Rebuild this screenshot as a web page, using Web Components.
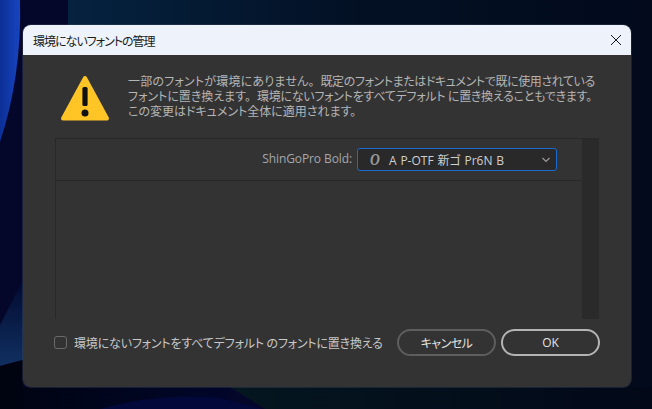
<!DOCTYPE html>
<html lang="ja">
<head>
<meta charset="utf-8">
<style>
  html, body { margin: 0; height: 100%; background: #020a1c; overflow: hidden; }
  .a { letter-spacing: .2px; }
  .b { letter-spacing: -.4px; }
  .c { letter-spacing: -.25px; }
  .stop { margin-right: 6px; }
</style>
</head>
<body>
<desktop-screen>
  <font-dialog heading="環境にないフォントの管理">
    <alert-message><span class="a">一部のフォントが環境にありません</span><span class="stop">。</span><span class="b">既定のフォントまたはドキュメントで既に使用されている</span><br><span>フォントに置き換えます</span><span class="stop">。</span><span class="c">環境にないフォントをすべてデフォルト に置き換えることもできます。</span><br>この変更はドキュメント全体に適用されます。</alert-message>
    <font-table>
      <font-row label="ShinGoPro Bold:" value="A P-OTF 新ゴ Pr6N B"></font-row>
    </font-table>
    <dialog-footer>
      <check-box>環境にないフォントをすべてデフォルト のフォントに置き換える</check-box>
      <pill-button slot="actions">キャンセル</pill-button>
      <pill-button slot="actions" primary>OK</pill-button>
    </dialog-footer>
  </font-dialog>
</desktop-screen>
<script>
const FONT = '"Noto Sans CJK JP", "Open Sans", sans-serif';

class DesktopScreen extends HTMLElement {
  connectedCallback() {
    this.attachShadow({ mode: 'open' }).innerHTML = `
      <style>
        :host { display: block; position: relative; width: 652px; height: 409px; overflow: hidden; background: #020a1c; font-family: ${FONT}; font-feature-settings: "palt"; }
        svg { position: absolute; inset: 0; }
        .stage { position: relative; padding: 25px 21px 22px 23px; height: 100%; box-sizing: border-box; }
      </style>
      <svg width="652" height="409" viewBox="0 0 652 409">
        <defs>
          <linearGradient id="blue" x1="0" y1="0" x2="1" y2="0">
            <stop offset="0" stop-color="#0c2f96"/>
            <stop offset="1" stop-color="#1745c0"/>
          </linearGradient>
          <linearGradient id="navy" x1="0" y1="0" x2="1" y2="0">
            <stop offset="0" stop-color="#05223f"/>
            <stop offset="0.5" stop-color="#031024"/>
            <stop offset="1" stop-color="#020a1c"/>
          </linearGradient>
          <linearGradient id="low" x1="0" y1="0" x2="0" y2="1">
            <stop offset="0" stop-color="#020a30"/>
            <stop offset="1" stop-color="#103060"/>
          </linearGradient>
          <linearGradient id="floor" x1="0" y1="0" x2="1" y2="0">
            <stop offset="0" stop-color="#000414"/>
            <stop offset="1" stop-color="#01062a"/>
          </linearGradient>
          <linearGradient id="shore" x1="0" y1="0" x2="1" y2="0">
            <stop offset="0" stop-color="#04161f"/>
            <stop offset="1" stop-color="#020818"/>
          </linearGradient>
        </defs>
        <rect width="652" height="409" fill="#04062a"/>
        <rect x="68" width="584" height="60" fill="url(#navy)"/>
        <rect x="600" y="60" width="52" height="349" fill="#020a1c"/>
        <path d="M0 0H20Q22 75 0 142Z" fill="url(#blue)"/>
        <path d="M0 325L23 280V360L0 366Z" fill="url(#low)"/>
        <path d="M0 366L23 360V409H0Z" fill="#000310"/>
        <rect x="23" y="387" width="207" height="22" fill="url(#floor)"/>
        <path d="M100 409Q160 392 220 398L262 409Z" fill="#02083a"/>
        <path d="M230 387H652V409H265Z" fill="url(#shore)"/>
      </svg>
      <div class="stage"><slot></slot></div>`;
  }
}

class FontDialog extends HTMLElement {
  connectedCallback() {
    this.attachShadow({ mode: 'open' }).innerHTML = `
      <style>
        :host { display: flex; flex-direction: column; height: 362px; border-radius: 8px; overflow: hidden; background: #333333; box-shadow: 0 0 0 1px rgba(70,80,100,.35); }
        header { flex: none; height: 30px; display: flex; align-items: center; justify-content: space-between; padding: 0 9px 0 10px; background: #eef2fa; color: #1a1a1a; font-size: 12px; letter-spacing: -1px; }
        svg { display: block; }
        main { flex: 1; display: flex; flex-direction: column; padding: 20px 32px 0 32px; }
      </style>
      <header>
        <span>${this.getAttribute('heading')}</span>
        <svg width="12" height="12" viewBox="0 0 12 12"><path d="M1 1L11 11M11 1L1 11" stroke="#1a1a1a" stroke-width="1" fill="none"/></svg>
      </header>
      <main><slot></slot></main>`;
  }
}

class AlertMessage extends HTMLElement {
  connectedCallback() {
    this.attachShadow({ mode: 'open' }).innerHTML = `
      <style>
        :host { display: flex; gap: 18px; height: 63px; color: #b5b5b5; font-size: 12px; line-height: 15px; white-space: nowrap; }
        svg { flex: none; display: block; margin-left: 5px; }
        .text { margin-top: -2px; }
      </style>
      <svg width="50" height="46" viewBox="0 0 50 46">
        <path d="M25 3 L47 43.5 H3 Z" fill="#ffc425" stroke="#ffc425" stroke-width="4" stroke-linejoin="round"/>
        <rect x="22.4" y="12" width="5.2" height="19" rx="1.6" fill="#111"/>
        <circle cx="25" cy="38" r="3.5" fill="#111"/>
      </svg>
      <div class="text"><slot></slot></div>`;
  }
}

class FontTable extends HTMLElement {
  connectedCallback() {
    this.attachShadow({ mode: 'open' }).innerHTML = `
      <style>
        :host { display: grid; grid-template-columns: 1fr 17px; height: 181px; border-top: 1px solid #282828; border-left: 1px solid #282828; box-sizing: border-box; }
        .rows { min-width: 0; }
        .bar { background: #2a2a2a; }
      </style>
      <div class="rows"><slot></slot></div>
      <div class="bar"></div>`;
  }
}

class FontRow extends HTMLElement {
  connectedCallback() {
    this.attachShadow({ mode: 'open' }).innerHTML = `
      <style>
        :host { display: flex; align-items: center; justify-content: flex-end; gap: 5px; height: 41px; padding-right: 25px; border-bottom: 1px solid #282828; color: #a4a8ac; font-size: 12px; }
        .label { font-family: "Open Sans", sans-serif; position: relative; top: -1px; letter-spacing: -.1px; }
        .select { box-sizing: border-box; width: 200px; height: 23px; display: flex; align-items: center; border: 1px solid #1a6ad0; border-radius: 3px; background: #292929; color: #d0d0d0; padding: 0 5px 0 12px; }
        .glyph { font: italic 700 17px "Liberation Serif", serif; color: #9a9a9a; width: 19px; }
        .glyph b { display: inline-block; font-weight: inherit; transform: scaleX(.8); transform-origin: left center; }
        .value { flex: 1; font-family: "Open Sans", "Noto Sans CJK JP", sans-serif; word-spacing: .7px; }
        svg { display: block; }
      </style>
      <span class="label">${this.getAttribute('label')}</span>
      <div class="select">
        <span class="glyph"><b>O</b></span>
        <span class="value">${this.getAttribute('value')}</span>
        <svg width="10" height="6" viewBox="0 0 10 6"><path d="M1.5 1L5 4.5L8.5 1" stroke="#9a9a9a" stroke-width="1.2" fill="none"/></svg>
      </div>`;
  }
}

class DialogFooter extends HTMLElement {
  connectedCallback() {
    this.attachShadow({ mode: 'open' }).innerHTML = `
      <style>
        :host { display: flex; align-items: center; justify-content: space-between; margin-top: 10px; height: 27px; margin-right: -1px; }
        .actions { display: flex; gap: 5px; }
      </style>
      <slot></slot>
      <div class="actions"><slot name="actions"></slot></div>`;
  }
}

class CheckBox extends HTMLElement {
  connectedCallback() {
    this.attachShadow({ mode: 'open' }).innerHTML = `
      <style>
        :host { display: flex; align-items: center; gap: 7px; color: #c8c8c8; font-size: 12px; margin-left: -1px; white-space: nowrap; letter-spacing: -.17px; }
        i { display: block; width: 11px; height: 11px; border: 1px solid #6a6a6a; border-radius: 3px; }
      </style>
      <i></i><span><slot></slot></span>`;
  }
}

class PillButton extends HTMLElement {
  connectedCallback() {
    const primary = this.hasAttribute('primary');
    this.attachShadow({ mode: 'open' }).innerHTML = `
      <style>
        :host { display: flex; align-items: center; justify-content: center; box-sizing: border-box; width: 99px; height: 27px; border-radius: 14px; border: 2px solid ${primary ? '#b4b4b4' : '#5e5e5e'}; color: #e2e2e2; font-size: 12px; font-family: "Open Sans", "Noto Sans CJK JP", sans-serif; letter-spacing: ${primary ? 0 : '-.5px'}; }
      </style>
      <slot></slot>`;
  }
}

customElements.define('desktop-screen', DesktopScreen);
customElements.define('font-dialog', FontDialog);
customElements.define('alert-message', AlertMessage);
customElements.define('font-table', FontTable);
customElements.define('font-row', FontRow);
customElements.define('dialog-footer', DialogFooter);
customElements.define('check-box', CheckBox);
customElements.define('pill-button', PillButton);
</script>
</body>
</html>
